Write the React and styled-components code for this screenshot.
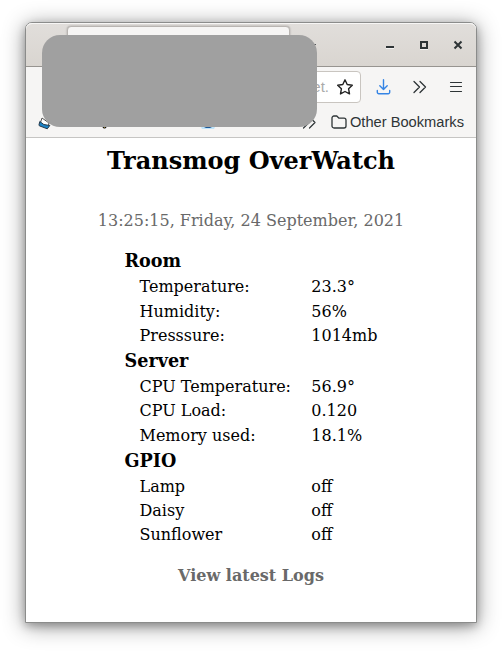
import React from "react";
import styled, { createGlobalStyle } from "styled-components";

const GlobalStyle = createGlobalStyle`
  * { box-sizing: border-box; }
  body { margin: 0; background: #fff; overflow: hidden; }
`;

const Desktop = styled.div`
  width: 502px;
  height: 651px;
  padding: 22px 25px 28px;
`;

const Window = styled.div`
  position: relative;
  display: flex;
  flex-direction: column;
  width: 452px;
  height: 601px;
  border: 1px solid #8b8c8b;
  border-radius: 7px 7px 0 0;
  background: #fff;
  box-shadow: 0 3px 22px rgba(0, 0, 0, 0.42), 0 3px 9px rgba(0, 0, 0, 0.25);
`;

const TitleBar = styled.div`
  display: flex;
  align-items: flex-start;
  height: 44px;
  padding: 3px 11px 0 41px;
  border-bottom: 1px solid #979490;
  border-radius: 6px 6px 0 0;
  background: linear-gradient(#e1dedb, #d9d5d0);
  box-shadow: inset 0 1px #f7f6f5;
`;

const Tab = styled.div`
  width: 223px;
  height: 34px;
  border: 1px solid #b9b5b1;
  border-radius: 4px;
  background: #f6f5f4;
  box-shadow: 0 0 2px rgba(0, 0, 0, 0.3);
`;

const NewTab = styled.svg`
  width: 10px;
  height: 10px;
  margin: 15px 0 0 16px;
`;

const Controls = styled.svg`
  width: 80px;
  height: 12px;
  margin: 13px 0 0 auto;
`;

const NavBar = styled.div`
  display: flex;
  flex: none;
  height: 40px;
  padding: 4px 12px 0 60px;
  background: #f6f5f4;
`;

const AddressBar = styled.div`
  display: flex;
  align-items: center;
  justify-content: flex-end;
  width: 275px;
  height: 32px;
  padding-right: 7px;
  border: 1px solid #c9c5c0;
  border-radius: 4px;
  background: #fff;
`;

const Address = styled.span`
  margin-right: 8px;
  color: #aaa;
  font: 15px/20px "Liberation Sans", Arial, sans-serif;
`;

const Icon = styled.svg`
  flex: none;
  width: 16px;
  height: 16px;
  fill: none;
  stroke: ${({ $color = "#2e3436" }) => $color};
  stroke-width: 1.4;
  stroke-linecap: round;
  stroke-linejoin: round;
`;

const Tools = styled.div`
  display: flex;
  align-items: center;
  gap: 20px;
  height: 32px;
  margin-left: auto;
`;

const BookmarkBar = styled.div`
  display: flex;
  flex: none;
  align-items: center;
  height: 31px;
  padding: 0 12px 0 11px;
  border-bottom: 1px solid #c6c5c3;
  background: #f6f5f4;
`;

const Favicon = styled.svg`
  width: 16px;
  height: 16px;
  margin-right: ${({ $gap }) => $gap}px;
`;

const Overflow = styled(Icon)`
  margin-left: auto;
`;

const Folder = styled.div`
  display: flex;
  align-items: center;
  gap: 3px;
  margin-left: 14px;
  color: #2e3436;
  font: 14.67px/18px "Liberation Sans", Arial, sans-serif;
  white-space: nowrap;
`;

const Redaction = styled.div`
  position: absolute;
  top: 12px;
  left: 16px;
  width: 275px;
  height: 92px;
  border-radius: 18px;
  background: #a0a0a0;
`;

const Page = styled.main`
  display: flex;
  flex: 1;
  flex-direction: column;
  align-items: center;
  color: #000;
  font: 16px/24px "DejaVu Serif", serif;
`;

const Title = styled.h1`
  margin: 9px 0 0;
  font-size: 24px;
  line-height: 28px;
`;

const Clock = styled.time`
  margin-top: 34px;
  color: #696969;
`;

const Readings = styled.div`
  width: 253px;
  margin-top: 15px;
`;

const Heading = styled.h2`
  height: 27px;
  margin: 0;
  font-size: 17.6px;
  line-height: 26px;
`;

const Reading = styled.div`
  display: grid;
  grid-template-columns: 171.8px 1fr;
  height: ${({ $height }) => $height}px;
  padding-left: 15px;
  line-height: 24px;
  white-space: nowrap;
`;

const Logs = styled.a`
  margin-top: 18px;
  color: #696969;
  font-weight: bold;
`;

const groups = [
  { name: "Room", rows: [["Temperature:", "23.3°", 25], ["Humidity:", "56%", 24], ["Presssure:", "1014mb", 24]] },
  { name: "Server", rows: [["CPU Temperature:", "56.9°", 24], ["CPU Load:", "0.120", 25], ["Memory used:", "18.1%", 24]] },
  { name: "GPIO", rows: [["Lamp", "off", 24], ["Daisy", "off", 24], ["Sunflower", "off", 23]] },
];

export default function App() {
  return (
    <Desktop>
      <GlobalStyle />
      <Window>
        <TitleBar>
          <Tab />
          <NewTab viewBox="0 0 10 10"><path d="M0 3.5h10M5 0v8" stroke="#55585a" /></NewTab>
          <Controls viewBox="0 0 80 12">
            <path d="M1 9.5h8" stroke="#fff" opacity=".7" />
            <path d="M1 8h8" stroke="#2e3436" strokeWidth="2" />
            <path d="M35 10.5h8" stroke="#fff" opacity=".7" />
            <rect x="36" y="3" width="6" height="6" fill="none" stroke="#2e3436" strokeWidth="2" />
            <path d="m69.5 2.5 7 7m0-7-7 7" stroke="#2e3436" strokeWidth="2" />
          </Controls>
        </TitleBar>
        <NavBar>
          <AddressBar>
            <Address>et.</Address>
            <Icon viewBox="0 0 16 16" $color="#222"><path d="m8 .8 2.2 4.7 5.1.7-3.7 3.6.9 5.1L8 12.5l-4.5 2.4.9-5.1L.7 6.2l5.1-.7z" /></Icon>
          </AddressBar>
          <Tools>
            <Icon viewBox="0 0 16 16" $color="#3584e4"><path d="M7.5.8v9.7M3.8 6.8l3.7 3.7 3.7-3.7M1.3 11.5v1.7a1.5 1.5 0 0 0 1.5 1.5h9.4a1.5 1.5 0 0 0 1.5-1.5v-1.7" /></Icon>
            <Icon viewBox="0 0 16 16"><path d="m2 2.5 5.5 5.5L2 13.5m6-11L13.5 8 8 13.5" strokeWidth="1.3" /></Icon>
            <Icon viewBox="0 0 16 16"><path d="M2.5 3.5h11M2.5 7.5h11M2.5 12.5h11" strokeWidth="1.2" /></Icon>
          </Tools>
        </NavBar>
        <BookmarkBar>
          <Favicon viewBox="0 0 16 16" $gap={43}>
            <path d="m5 4 7 5-1 4-8-3z" fill="#fff" stroke="#555" />
            <path d="M2 10.8 2.8 7.500l4 3 6 1-2.500 3.300-8-3z" fill="#1b82c5" stroke="#27394a" />
          </Favicon>
          <Favicon viewBox="0 0 16 16" $gap={88}><path d="M6.5 10h4v3h-1v1h-2v-1h-1z" fill="#e9c638" stroke="#111" /></Favicon>
          <Favicon viewBox="0 0 16 16" $gap={0}>
            <path d="M0 11h16l-2 4H2z" fill="#bfe4fa" />
            <path d="M4 10h8v3l-2 1H6l-2-1z" fill="#1b5899" />
          </Favicon>
          <Overflow viewBox="0 0 16 16"><path d="m2.5 3 5.5 5.5L2.5 14m6-11L14 8.5 8.5 14" strokeWidth="1.2" /></Overflow>
          <Folder>
            <Icon viewBox="0 0 16 16"><path d="M3 2h2.8L8 4.2h5a2 2 0 0 1 2 2V12a2 2 0 0 1-2 2H3a2 2 0 0 1-2-2V4a2 2 0 0 1 2-2z" strokeWidth="1.3" /></Icon>
            Other Bookmarks
          </Folder>
        </BookmarkBar>
        <Page>
          <Title>Transmog OverWatch</Title>
          <Clock>13:25:15, Friday, 24 September, 2021</Clock>
          <Readings>
            {groups.map(({ name, rows }) => (
              <section key={name}>
                <Heading>{name}</Heading>
                {rows.map(([label, value, height]) => (
                  <Reading key={label} $height={height}><span>{label}</span><span>{value}</span></Reading>
                ))}
              </section>
            ))}
          </Readings>
          <Logs>View latest Logs</Logs>
        </Page>
        <Redaction />
      </Window>
    </Desktop>
  );
}
